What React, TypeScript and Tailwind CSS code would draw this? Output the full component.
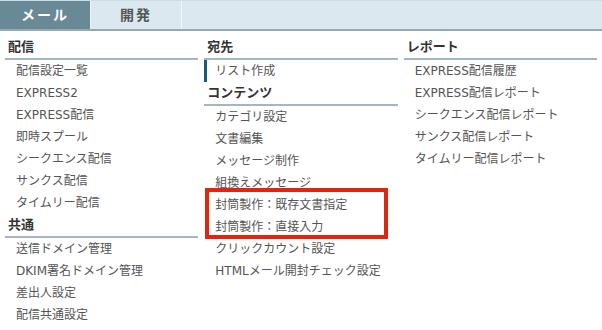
import React from "react";

type Section = { title: string; items: string[]; active?: string };

const columns: Section[][] = [
  [
    {
      title: "配信",
      items: ["配信設定一覧", "EXPRESS2", "EXPRESS配信", "即時スプール", "シークエンス配信", "サンクス配信", "タイムリー配信"],
    },
    { title: "共通", items: ["送信ドメイン管理", "DKIM署名ドメイン管理", "差出人設定", "配信共通設定"] },
  ],
  [
    { title: "宛先", items: ["リスト作成"], active: "リスト作成" },
    {
      title: "コンテンツ",
      items: [
        "カテゴリ設定",
        "文書編集",
        "メッセージ制作",
        "組換えメッセージ",
        "封筒製作：既存文書指定",
        "封筒製作：直接入力",
        "クリックカウント設定",
        "HTMLメール開封チェック設定",
      ],
    },
  ],
  [
    {
      title: "レポート",
      items: ["EXPRESS配信履歴", "EXPRESS配信レポート", "シークエンス配信レポート", "サンクス配信レポート", "タイムリー配信レポート"],
    },
  ],
];

function MenuSection({ section }: { section: Section }) {
  return (
    <div>
      <div className="h-[22px] leading-[22px] pl-[3px] text-[13px] font-bold text-[#333]">{section.title}</div>
      <div className="h-[2px] bg-[#a4b6be]" />
      <ul>
        {section.items.map((item) =>
          item === section.active ? (
            <li key={item} className="h-[22px] leading-[23px] border-l-[3px] border-[#1d5c78] pl-[8px] text-[12px] text-[#555]">
              {item}
            </li>
          ) : (
            <li key={item} className="h-[22px] leading-[23px] pl-[11px] text-[12px] text-[#555]">
              {item}
            </li>
          )
        )}
      </ul>
    </div>
  );
}

export default function App() {
  return (
    <div className="w-[602px] h-[330px] bg-white overflow-hidden font-['DejaVu_Sans','Noto_Sans_CJK_JP',sans-serif]">
      {/* tab bar */}
      <div className="flex h-[31px] bg-[#dbe8ef] border-t border-[#cddde5] border-b-2 border-b-[#93a9b3]">
        <div className="w-[91px] flex items-center justify-center bg-[#6a8996] text-white text-[14px] font-bold tracking-[2px] border-r border-[#eef4f7]">
          メール
        </div>
        <div className="w-[91px] flex items-center justify-center text-[#555] text-[14px] font-bold tracking-[2px] border-r border-[#f1f6f9]">
          開発
        </div>
      </div>

      {/* menu columns */}
      <div className="grid grid-cols-3 gap-[6px] px-[5px] pt-[5px]">
        {columns.map((col, i) => (
          <div key={i} className="relative">
            {col.map((section) => (
              <MenuSection key={section.title} section={section} />
            ))}
            {i === 1 && <div className="absolute left-[1px] top-[152px] w-[183px] h-[51px] border-4 border-[#e0260f]" />}
          </div>
        ))}
      </div>
    </div>
  );
}
